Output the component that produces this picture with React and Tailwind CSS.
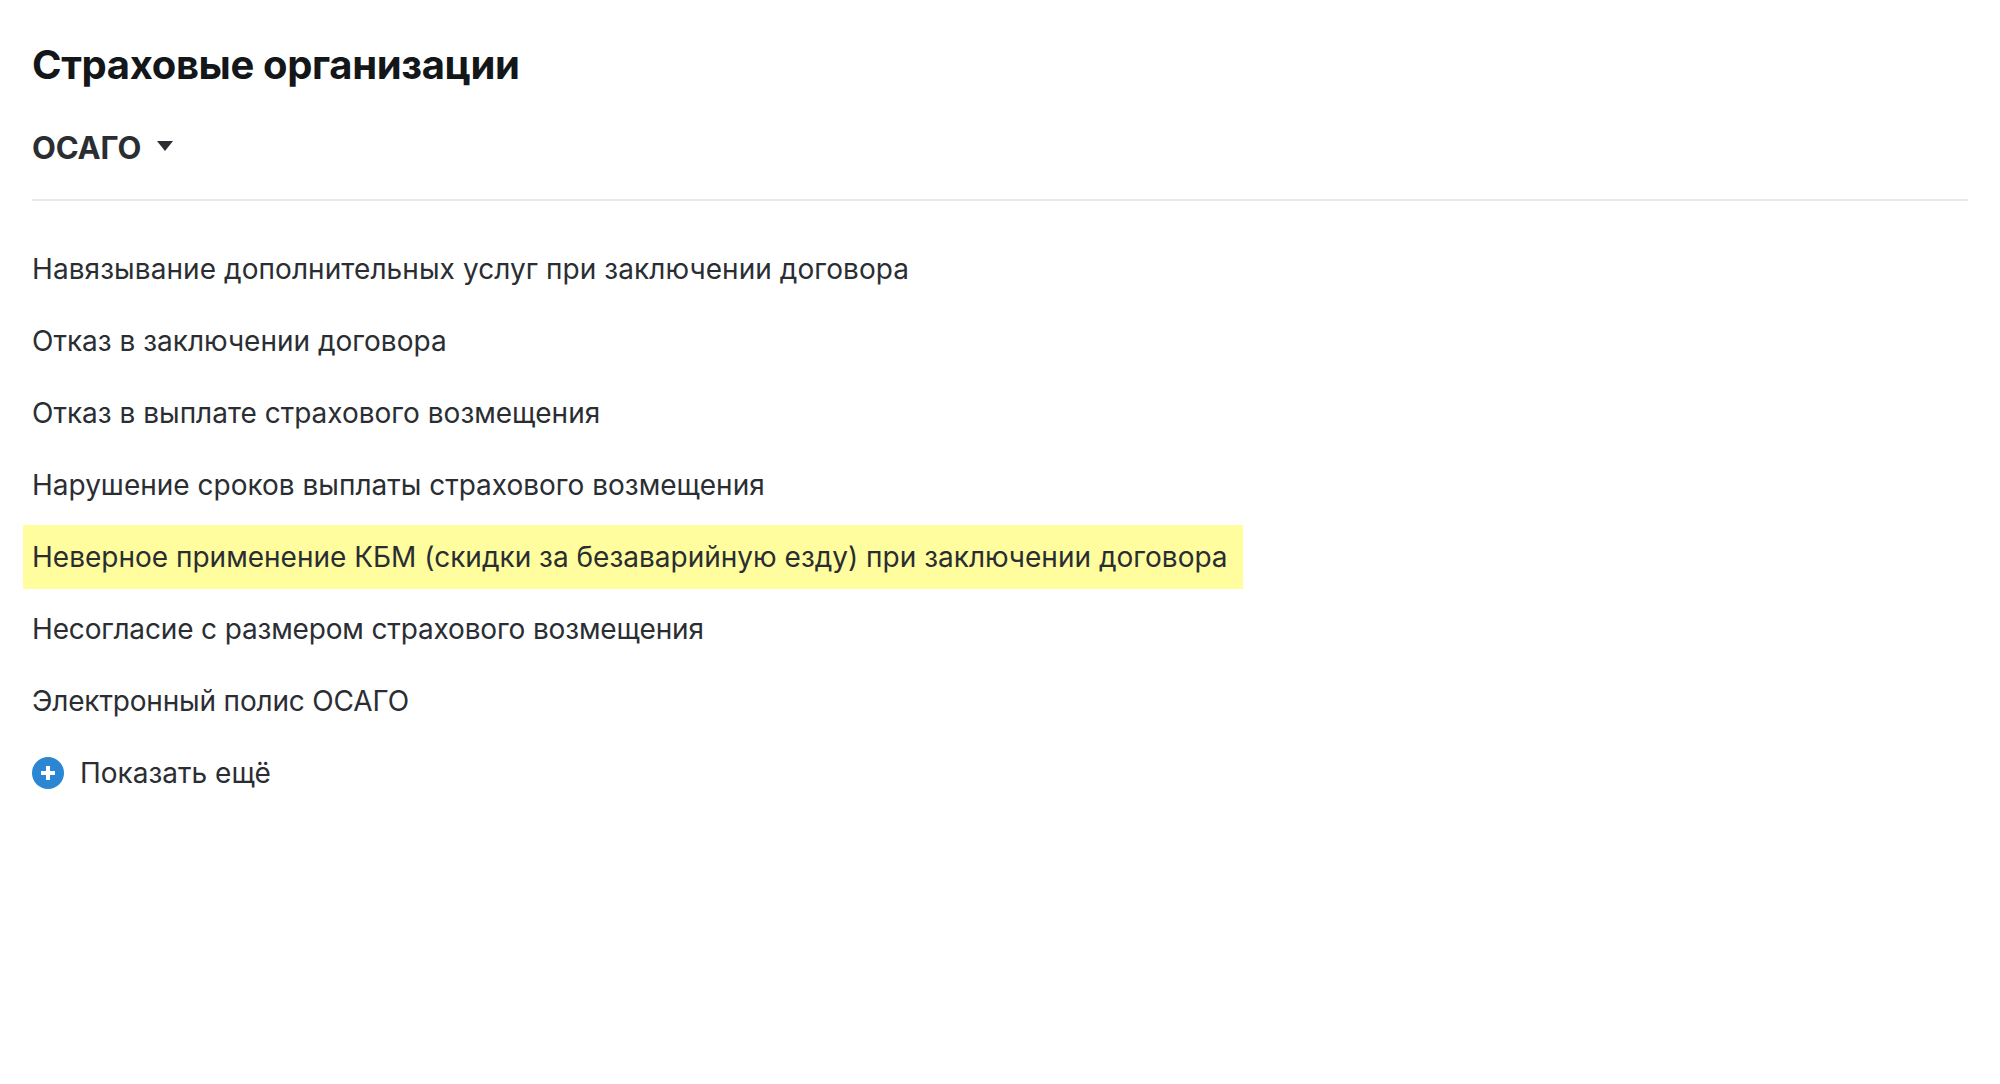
import React from 'react';

const ITEMS = [
  { text: 'Навязывание дополнительных услуг при заключении договора', cls: 'tracking-[0.07px]' },
  { text: 'Отказ в заключении договора', cls: '' },
  { text: 'Отказ в выплате страхового возмещения', cls: '' },
  { text: 'Нарушение сроков выплаты страхового возмещения', cls: '' },
];

const ITEMS_AFTER = [
  { text: 'Несогласие с размером страхового возмещения', cls: 'tracking-[-0.15px]' },
  { text: 'Электронный полис ОСАГО', cls: 'tracking-[-0.17px]' },
];

const Row = ({ children, className = '' }) => (
  <div className={`h-[72px] flex items-center text-[28px] text-[#2a2e33] ${className}`}>{children}</div>
);

export default function App() {
  return (
    <div className="min-h-screen bg-white pl-8 pr-8 pt-[37px] font-['Inter','Noto_Sans',sans-serif]">
      <h1 className="text-[40px] leading-[56px] font-bold tracking-[-0.36px] text-[#14171a]">Страховые организации</h1>
      <div className="mt-[35px] pb-[31px] border-b-2 border-[#e8e9ea]">
        <div className="h-10 flex items-center">
          <span className="text-[31px] font-bold tracking-[-0.2px] text-[#2a2e33]">ОСАГО</span>
          <svg className="ml-[16px] mb-1" width="16" height="10" viewBox="0 0 16 10">
            <path d="M0 0h16L8 10z" fill="#2a2e33" />
          </svg>
        </div>
      </div>
      <div className="mt-8">
        {ITEMS.map((item) => (
          <Row key={item.text} className={item.cls}>{item.text}</Row>
        ))}
        <Row>
          <span className="-ml-[9px] pl-[9px] w-[1220px] h-[64px] flex items-center bg-[#fffd9e] whitespace-nowrap">
            Неверное применение КБМ (скидки за безаварийную езду) при заключении договора
          </span>
        </Row>
        {ITEMS_AFTER.map((item) => (
          <Row key={item.text} className={item.cls}>{item.text}</Row>
        ))}
        <Row>
          <svg width="32" height="32" viewBox="0 0 32 32">
            <circle cx="16" cy="16" r="16" fill="#2b87d3" />
            <path d="M16 9v14M9 16h14" stroke="#fff" strokeWidth="4" />
          </svg>
          <span className="ml-4">Показать ещё</span>
        </Row>
      </div>
    </div>
  );
}
